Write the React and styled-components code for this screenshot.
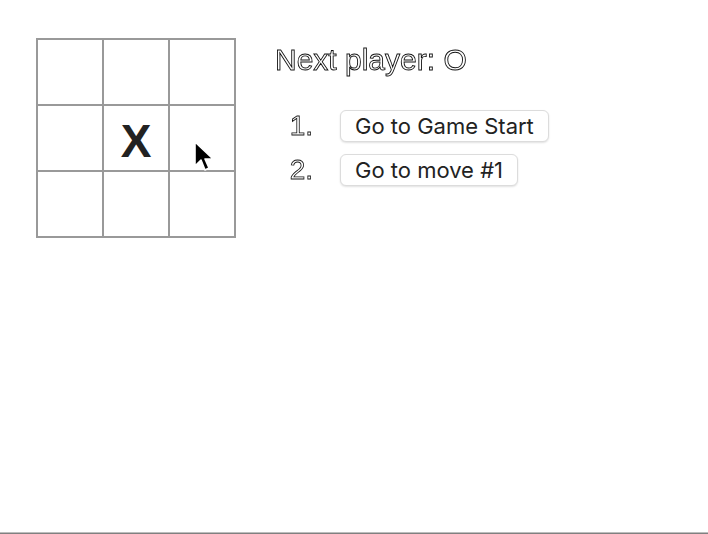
import React from "react";
import styled, { createGlobalStyle } from "styled-components";

const GlobalStyle = createGlobalStyle`
  body {
    margin: 0;
    background: #fff;
    font-family: "Liberation Sans", Arial, sans-serif;
  }
`;

const Page = styled.div`
  height: 534px;
  display: flex;
  flex-direction: column;
  box-sizing: border-box;
`;

const Game = styled.div`
  flex: 1;
  display: flex;
  align-items: flex-start;
  padding: 38px 0 0 36px;
`;

const BoardWrap = styled.div`
  position: relative;
`;

const Board = styled.div`
  display: grid;
  grid-template-columns: repeat(3, 66px);
  grid-template-rows: repeat(3, 66px);
  border-left: 2px solid #999;
  border-top: 2px solid #999;
`;

const Square = styled.button`
  all: unset;
  box-sizing: border-box;
  width: 66px;
  height: 66px;
  border-right: 2px solid #999;
  border-bottom: 2px solid #999;
  display: flex;
  align-items: center;
  justify-content: center;
  padding-top: 5px;
  font-family: "Liberation Sans", Arial, sans-serif;
  font-weight: 700;
  font-size: 46px;
  color: #222;
`;

const Pointer = styled.svg`
  position: absolute;
  left: 157px;
  top: 102px;
  pointer-events: none;
`;

const Info = styled.div`
  margin-left: 39px;
  display: flex;
  flex-direction: column;
`;

const Outlined = styled.span`
  font-family: "Liberation Sans", Arial, sans-serif;
  color: #fff;
  -webkit-text-stroke: 0.9px #111;
  will-change: transform;
`;

const Status = styled(Outlined)`
  display: block;
  font-size: 30px;
  line-height: 36px;
  margin-top: 4px;
`;

const Moves = styled.ol`
  list-style: none;
  margin: 32px 0 0;
  padding: 0;
  display: flex;
  flex-direction: column;
  gap: 12px;
`;

const Move = styled.li`
  display: flex;
  align-items: center;
`;

const Num = styled(Outlined)`
  width: 38px;
  text-align: right;
  margin-right: 27px;
  font-size: 28px;
  -webkit-text-stroke: 0.8px #111;
`;

const JumpButton = styled.button`
  height: 32px;
  box-sizing: border-box;
  padding: 0 14px;
  background: #fff;
  border: 1px solid #dcdcdc;
  border-radius: 6px;
  box-shadow: 0 1px 2px rgba(0, 0, 0, 0.12);
  font-family: Inter, "Liberation Sans", sans-serif;
  font-size: 22px;
  color: #222;
`;

const WindowEdge = styled.div`
  height: 2px;
  background: linear-gradient(#bdbdbd 50%, #808080 50%);
`;

const squares = [null, null, null, null, "X", null, null, null, null];
const moves = ["Go to Game Start", "Go to move #1"];

export default function App() {
  return (
    <>
      <GlobalStyle />
      <Page>
        <Game>
          <BoardWrap>
            <Board>
              {squares.map((v, i) => (
                <Square key={i}>{v}</Square>
              ))}
            </Board>
            <Pointer width="24" height="36" viewBox="0 0 24 36">
              <path
                d="M2 2 L2 26 L8 20 L12 30 L16 28 L12 19 L20 19 Z"
                fill="#000"
                stroke="#fff"
                strokeWidth="1.6"
                strokeLinejoin="round"
              />
            </Pointer>
          </BoardWrap>
          <Info>
            <Status>Next player: O</Status>
            <Moves>
              {moves.map((m, i) => (
                <Move key={i}>
                  <Num>{i + 1}.</Num>
                  <JumpButton>{m}</JumpButton>
                </Move>
              ))}
            </Moves>
          </Info>
        </Game>
        <WindowEdge />
      </Page>
    </>
  );
}
